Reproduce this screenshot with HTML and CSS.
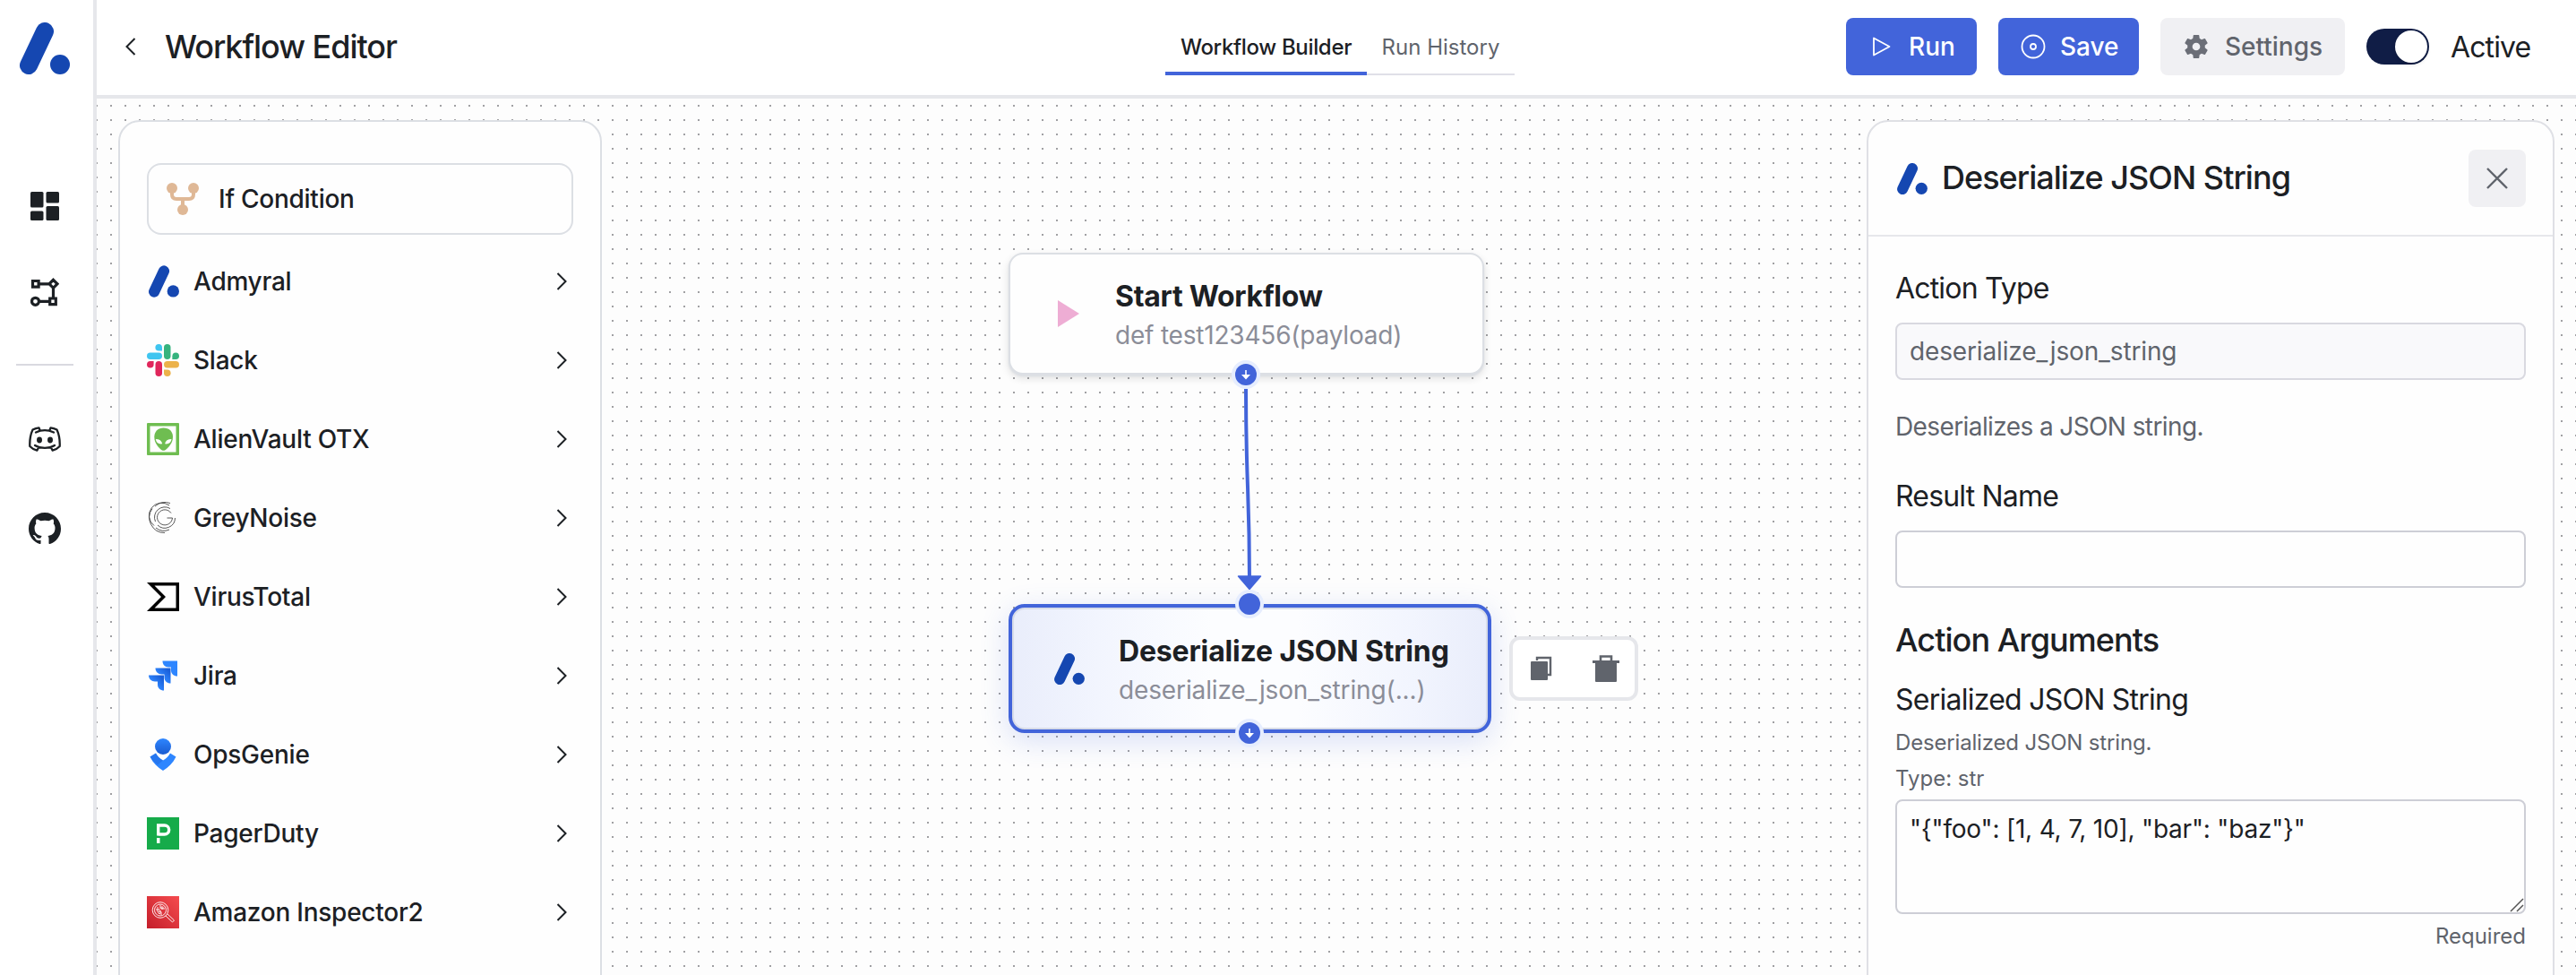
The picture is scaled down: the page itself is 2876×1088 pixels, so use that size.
FILE: index.html
```html
<!DOCTYPE html>
<html lang="en">
<head>
<meta charset="utf-8">
<title>Workflow Editor</title>
<link rel="stylesheet" href="styles.css">
</head>
<body>
<svg class="defs" width="0" height="0">
  <symbol id="logo" viewBox="0 0 56 58"><path d="M28 10 10 48" fill="none" stroke="#1547b1" stroke-width="20" stroke-linecap="round"/><circle cx="45" cy="47" r="11" fill="#1547b1"/></symbol>
  <symbol id="chev" viewBox="0 0 12 20"><path d="M1.500 1 10.500 10 1.500 19" fill="none" stroke="#1c2024" stroke-width="2"/></symbol>
  <symbol id="down" viewBox="0 0 32 32"><circle cx="16" cy="16" r="16" fill="#e6edfe"/><circle cx="16" cy="16" r="12" fill="#4264da"/><path d="M15.200 11h1.600v5h4.200l-5 5.500-5-5.500h4.200z" fill="#fff"/></symbol>
</svg>
<div class="app">
  <nav class="sidebar">
    <svg class="brand" viewBox="0 0 56 58"><use href="#logo"/></svg>
    <svg class="nav-dash" viewBox="0 0 32 32" fill="#1c2024"><rect width="14.500" height="17.500" rx="1.500"/><rect x="17.500" width="14.500" height="12.500" rx="1.500"/><rect y="21.500" width="14.500" height="10.500" rx="1.500"/><rect x="17.500" y="16" width="14.500" height="16" rx="1.500"/></svg>
    <svg class="nav-flow" viewBox="0 0 32 32" fill="none" stroke="#1c2024" stroke-width="3.200"><path d="M2.500 3.500h6.600v6.600H2.500zM9 6.800h12M25.500 2.300l4.500 4.500-4.500 4.500-4.500-4.500zM25.500 11v12M21.700 23h6.600v6.600h-6.600zM22 26.300H10"/><circle cx="5.500" cy="26.300" r="4"/></svg>
    <span class="nav-line"></span>
    <svg class="nav-discord" viewBox="0 0 36 28" fill="none" stroke="#1c2024" stroke-width="2.300" stroke-linecap="round" stroke-linejoin="round"><path d="M8 6.500C14 3.500 22 3.500 28 6.500M7 21c6 3.800 16 3.800 22 0M12.500 4 11.500 1.300C8.500 1.500 6.500 2.400 4.500 3.600 2 9 1 15 1.300 22c2.200 2.300 4.700 3.800 8 4.700l2-3.700M23.500 4l1-2.700c3 .2 5 1.100 7 2.300 2.500 5.400 3.500 11.400 3.200 18.400-2.200 2.300-4.700 3.800-8 4.700l-2-3.700"/><g fill="#1c2024" stroke="none"><ellipse cx="12" cy="15" rx="3" ry="3.400"/><ellipse cx="24" cy="15" rx="3" ry="3.400"/></g></svg>
    <svg class="nav-github" viewBox="0 0 16 16" fill="#1c2024"><path d="M8 0C3.580 0 0 3.580 0 8c0 3.540 2.290 6.530 5.470 7.590.4.070.55-.17.55-.38 0-.19-.01-.82-.01-1.490-2.010.37-2.530-.49-2.690-.94-.09-.23-.48-.94-.82-1.130-.28-.15-.68-.52-.01-.53.63-.01 1.080.58 1.230.82.72 1.210 1.870.87 2.330.66.07-.52.28-.87.51-1.070-1.780-.2-3.640-.89-3.640-3.950 0-.87.31-1.590.82-2.150-.08-.2-.36-1.020.08-2.120 0 0 .67-.21 2.200.82.64-.18 1.320-.27 2-.27s1.360.09 2 .27c1.530-1.040 2.200-.82 2.200-.82.44 1.100.16 1.920.08 2.120.51.56.82 1.270.82 2.150 0 3.070-1.870 3.750-3.650 3.950.29.25.54.73.54 1.480 0 1.070-.01 1.930-.01 2.200 0 .21.15.46.55.38A8.010 8.010 0 0 0 16 8c0-4.420-3.580-8-8-8z"/></svg>
  </nav>
  <div class="main">
    <header class="topbar">
      <div class="top-left">
        <svg class="back" viewBox="0 0 12 20"><path d="M10.500 1 1.500 10l9 9" fill="none" stroke="#1c2024" stroke-width="2"/></svg>
        <h1 class="title">Workflow Editor</h1>
      </div>
      <div class="tabs"><div class="tab tab-on"><span>Workflow Builder</span></div><div class="tab"><span>Run History</span></div></div>
      <div class="top-right">
        <button class="btn btn-run"><svg width="20" height="22" viewBox="0 0 20 22"><path d="M1 1.500v19L18.500 11z" fill="none" stroke="#fff" stroke-width="1.800" stroke-linejoin="round"/></svg><span>Run</span></button>
        <button class="btn btn-save"><svg width="28" height="28" viewBox="0 0 28 28" fill="none" stroke="#fff" stroke-width="1.800"><circle cx="14" cy="14" r="12.500"/><circle cx="14" cy="14" r="3"/></svg><span>Save</span></button>
        <button class="btn btn-set"><svg width="28" height="28" viewBox="1.700 1.700 20.600 20.600" fill="#6b6e77"><path d="M19.140 12.940c.04-.3.060-.61.060-.94 0-.32-.02-.64-.07-.94l2.030-1.580a.49.490 0 0 0 .12-.61l-1.920-3.320a.488.488 0 0 0-.59-.22l-2.390.96c-.5-.38-1.030-.7-1.620-.94l-.36-2.540a.484.484 0 0 0-.48-.41h-3.840c-.24 0-.43.17-.47.41l-.36 2.540c-.59.24-1.130.57-1.620.94l-2.390-.96c-.22-.08-.47 0-.59.22L2.740 8.870c-.12.21-.08.47.12.61l2.030 1.580c-.05.3-.09.63-.09.94s.02.64.07.94l-2.030 1.580a.49.490 0 0 0-.12.61l1.920 3.320c.12.22.37.29.59.22l2.390-.96c.5.38 1.030.7 1.620.94l.36 2.540c.05.24.24.41.48.41h3.840c.24 0 .44-.17.47-.41l.36-2.540c.59-.24 1.130-.56 1.620-.94l2.390.96c.22.080.47 0 .59-.22l1.920-3.320c.12-.22.07-.47-.12-.61zM12 15.200a3.200 3.200 0 1 1 0-6.400 3.200 3.200 0 0 1 0 6.400z"/></svg><span>Settings</span></button>
        <span class="switch"><span class="thumb"></span></span>
        <span class="active-label">Active</span>
      </div>
    </header>
    <div class="canvas">
      <aside class="palette">
        <div class="if-box"><svg width="36" height="36" viewBox="0 0 36 36" fill="#dfb896"><circle cx="6" cy="6" r="6"/><circle cx="30" cy="6" r="6"/><circle cx="18" cy="30" r="6"/><path d="M6 10v3q0 5 5 5h14q5 0 5-5v-3M18 18v8" fill="none" stroke="#dfb896" stroke-width="4"/></svg><span>If Condition</span></div>
        <div class="item"><svg class="ic" viewBox="-2 0 36 36"><use href="#logo" x="0" y="0" width="34" height="36"/></svg><span>Admyral</span><svg class="chev"><use href="#chev"/></svg></div>
        <div class="item"><svg class="ic" viewBox="0 0 36 36"><g fill="#3fc5f0"><path d="M13.200 0a3.800 3.800 0 0 1 3.800 3.800v3.800h-3.800a3.800 3.800 0 0 1 0-7.600z"/><rect y="9.500" width="17" height="7.500" rx="3.750"/></g><g fill="#35b37e"><rect x="19" width="7.500" height="17" rx="3.750"/><path d="M36 13.200a3.800 3.800 0 0 1-3.800 3.800h-3.800v-3.800a3.800 3.800 0 0 1 7.600 0z"/></g><g fill="#ecb24a"><rect x="19" y="19" width="17" height="7.500" rx="3.750"/><path d="M22.800 36a3.800 3.800 0 0 1-3.800-3.800v-3.800h3.800a3.800 3.800 0 0 1 0 7.600z"/></g><g fill="#e0265b"><rect x="9.500" y="19" width="7.500" height="17" rx="3.750"/><path d="M0 22.800A3.800 3.800 0 0 1 3.800 19h3.800v3.800a3.800 3.800 0 0 1-7.600 0z"/></g></svg><span>Slack</span><svg class="chev"><use href="#chev"/></svg></div>
        <div class="item"><svg class="ic" viewBox="0 0 36 36"><rect width="36" height="36" rx="1" fill="#6fbd51"/><rect x="3.500" y="3.500" width="29" height="29" fill="#fff"/><path d="M18.500 5.500C25 5.500 29 9.500 29 15.500c0 7.500-5.500 12.500-8.500 14.700q-2 1.200-4 0C13.500 28 8.300 23 8.300 15.500 8.300 9.500 12.500 5.500 18.500 5.500z" fill="#6fbd51"/><path d="M9.800 18c4.200 0 6.700 1.700 7.400 5.300-4.200.6-6.900-1.300-7.400-5.300zM27.500 18c-4.200 0-6.700 1.700-7.400 5.300 4.200.6 6.900-1.300 7.400-5.300z" fill="#fff"/></svg><span>AlienVault OTX</span><svg class="chev"><use href="#chev"/></svg></div>
        <div class="item"><svg class="ic" viewBox="0 0 36 36" fill="none" stroke="#444" stroke-width=".9"><path d="M27 12.500A8.500 8.500 0 1 0 28.500 18H22.500M26 7.500A11.500 11.500 0 0 0 9.500 22M12 26A11.500 11.500 0 0 0 31.500 18M25 4A14 14 0 0 0 8 26.500M10 29A14.500 14.500 0 0 0 25 31M26 1.500A17 17 0 0 0 9 5M6 7.500A17 17 0 0 0 20 34.500"/></svg><span>GreyNoise</span><svg class="chev"><use href="#chev"/></svg></div>
        <div class="item"><svg class="ic" viewBox="0 0 36 36"><path fill-rule="evenodd" d="M0 2h36v32H0l16-16zM8.500 5.500l12.500 12.500L8.500 30.500h24V5.500z"/></svg><span>VirusTotal</span><svg class="chev"><use href="#chev"/></svg></div>
        <div class="item"><svg class="ic" viewBox="0 0 36 36"><defs><linearGradient id="j" x1="1" y1="0" x2="0" y2="1"><stop offset=".15" stop-color="#1a5fd8"/><stop offset=".6" stop-color="#2e86ff"/></linearGradient></defs><path d="M17.500 1.500H34V18.500c-4 0-7-2.500-7-6.500V8.500h-3c-4 0-6.500-3-6.500-7z" fill="#2e86ff"/><path d="M9.500 9.500H26.500V26.500c-4 0-7-2.500-7-6.500v-3.500h-3c-4 0-7-3-7-7z" fill="url(#j)"/><path d="M2 17.500h17V34.500c-4 0-7-2.500-7-6.500v-3.500H9c-4 0-7-3-7-7z" fill="url(#j)"/></svg><span>Jira</span><svg class="chev"><use href="#chev"/></svg></div>
        <div class="item"><svg class="ic" viewBox="0 0 36 36"><defs><linearGradient id="o" x1="0" y1="0" x2="0" y2="1"><stop stop-color="#2e86ff"/><stop offset="1" stop-color="#1a5bd0"/></linearGradient></defs><circle cx="18" cy="9" r="9" fill="url(#o)"/><path d="M3.500 20.500 10 16.500q3 5.500 8 8 5-2.500 8-8l6.500 4C29 27.500 24 32.500 18 36 12 32.500 7 27.500 3.500 20.500z" fill="#2e86ff"/><path d="M10 16.500q3 5.500 8 8l-6 5Q6 25 3.500 20.500z" fill="#1f68e0" opacity=".5"/></svg><span>OpsGenie</span><svg class="chev"><use href="#chev"/></svg></div>
        <div class="item"><svg class="ic" viewBox="0 0 36 36"><rect width="36" height="36" fill="#16ab4a"/><path d="M12.700 20.500V9h7a5 5 0 0 1 0 10h-7" fill="none" stroke="#fff" stroke-width="3.400"/><path d="M11 23h3.500v6H11z" fill="#fff"/></svg><span>PagerDuty</span><svg class="chev"><use href="#chev"/></svg></div>
        <div class="item"><svg class="ic" viewBox="0 0 36 36"><defs><linearGradient id="a" x1="0" y1="1" x2="1" y2="0"><stop stop-color="#c41e2a"/><stop offset="1" stop-color="#f54b4e"/></linearGradient></defs><rect width="36" height="36" fill="url(#a)"/><g fill="none" stroke="#fff" stroke-width=".9"><circle cx="15" cy="15.500" r="8.800"/><circle cx="15" cy="15.500" r="6.500"/><path d="m21 22 7.500 7 2-2-7.500-7M15 10v4M10 15h4l2 3v3M16 14h4M12 12v6"/><circle cx="17" cy="13" r="1.200"/><circle cx="14" cy="18.500" r="1.200"/></g></svg><span>Amazon Inspector2</span><svg class="chev"><use href="#chev"/></svg></div>
      </aside>

      <svg class="edge" width="40" height="230" viewBox="0 0 40 230"><path d="M13 0C13 110 17 110 17 214" fill="none" stroke="#4264da" stroke-width="4"/><path d="M4.500 209h25L17 223.500z" fill="#4264da" stroke="#4264da" stroke-width="1.500" stroke-linejoin="round"/></svg>
      <div class="node node-start">
        <svg class="play" width="24" height="32" viewBox="0 0 24 32"><path d="M0 1v30l24-15z" fill="#eeadd4"/></svg>
        <div class="node-text"><b>Start Workflow</b><span>def test123456(payload)</span></div>
        <svg class="handle h-bottom"><use href="#down"/></svg>
      </div>
      <div class="node node-json">
        <svg class="node-logo" viewBox="0 0 56 58"><use href="#logo"/></svg>
        <div class="node-text"><b>Deserialize JSON String</b><span>deserialize_json_string(...)</span></div>
        <span class="handle h-top"></span>
        <svg class="handle h-bottom"><use href="#down"/></svg>
      </div>
      <div class="tools">
        <svg width="26" height="28" viewBox="0 0 26 28"><path d="M8 5V2h15v19h-3" fill="none" stroke="#60646c" stroke-width="2.400"/><rect x="1" y="6" width="19" height="21" rx="1" fill="#60646c"/></svg>
        <svg width="30" height="30" viewBox="0 0 30 30" fill="#60646c"><path d="M3 9h24v20a1 1 0 0 1-1 1H4a1 1 0 0 1-1-1zM0 6h30v3H0z"/><path d="M9 6V1.500h12V6" fill="none" stroke="#60646c" stroke-width="2.600"/></svg>
      </div>

      <aside class="panel">
        <div class="panel-head">
          <svg class="panel-logo" viewBox="0 0 56 58"><use href="#logo"/></svg>
          <h2 class="panel-title">Deserialize JSON String</h2>
          <button class="close"><svg width="24" height="24" viewBox="0 0 24 24"><path d="m1 1 22 22M23 1 1 23" stroke="#60646c" stroke-width="2.400"/></svg></button>
        </div>
        <div class="panel-body">
          <label class="lbl">Action Type</label>
          <div class="input input-off"><span>deserialize_json_string</span></div>
          <p class="desc">Deserializes a JSON string.</p>
          <label class="lbl">Result Name</label>
          <div class="input"></div>
          <h3 class="sec">Action Arguments</h3>
          <label class="lbl lbl-arg">Serialized JSON String</label>
          <p class="hint">Deserialized JSON string.</p>
          <p class="hint hint-type">Type: str</p>
          <div class="area"><span>"{"foo": [1, 4, 7, 10], "bar": "baz"}"</span><svg class="grip" width="16" height="16" viewBox="0 0 16 16"><path d="M1 15 15 1M8 15l7-7" stroke="#555" stroke-width="1.500"/></svg></div>
          <p class="req">Required</p>
        </div>
      </aside>
    </div>
  </div>
</div>
</body>
</html>
```
FILE: styles.css
```css
* { box-sizing: border-box; margin: 0; padding: 0; }
body { font-family: Inter, "Liberation Sans", sans-serif; color: #1c2024; background: #fff; overflow: hidden; font-size: 28px; }
svg { display: block; flex: none; }
.defs { position: absolute; }
button { border: 0; font: inherit; }
.app { display: flex; width: 2876px; height: 1088px; }

/* navigation rail */
.sidebar { width: 108px; flex: none; border-right: 4px solid #e6e7eb; display: flex; flex-direction: column; align-items: center; padding: 25px 4px 0 0; }
.brand { width: 56px; height: 58px; }
.nav-dash { width: 32px; height: 32px; margin-top: 131px; }
.nav-flow { width: 32px; height: 32px; margin-top: 64px; }
.nav-line { width: 64px; height: 2px; background: #d9d9e0; margin-top: 64px; }
.nav-discord { width: 36px; height: 28px; margin-top: 68px; }
.nav-github { width: 36px; height: 36px; margin-top: 68px; }

/* header */
.main { flex: 1; min-width: 0; display: flex; flex-direction: column; }
.topbar { height: 110px; flex: none; border-bottom: 4px solid #e6e7eb; display: flex; align-items: flex-start; padding: 20px 51px 0 32px; }
.top-left { display: flex; align-items: center; height: 64px; width: 1161px; }
.back { width: 12px; height: 20px; }
.title { font-size: 36px; font-weight: 500; margin-left: 32px; letter-spacing: -1.05px; white-space: nowrap; }
.tabs { display: flex; height: 64px; font-size: 24px; }
.tab { width: 165px; display: flex; align-items: center; justify-content: center; border-bottom: 2px solid #e0e0e8; color: #60646c; padding-top: 2px; white-space: nowrap; }
.tab-on { width: 225px; border-bottom: 4px solid #4264da; color: #1c2024; font-weight: 500; padding-top: 4px; letter-spacing: -0.33px; }
.top-right { display: flex; align-items: center; height: 64px; margin-left: auto; }
.btn { height: 64px; border-radius: 8px; display: flex; align-items: center; background: #4264da; color: #fff; font-weight: 500; margin-right: 24px; white-space: nowrap; }
.btn-run { width: 146px; padding-left: 30px; gap: 20px; }
.btn-save { width: 157px; padding-left: 25px; gap: 16px; }
.btn-set { width: 206px; padding-left: 26px; gap: 18px; background: #f0f0f3; color: #60646c; }
.switch { width: 70px; height: 40px; border-radius: 20px; background: #101d46; display: flex; justify-content: flex-end; padding: 2px; }
.thumb { width: 36px; height: 36px; border-radius: 50%; background: #fff; box-shadow: 0 2px 4px rgba(0,0,0,.15); }
.active-label { width: 89px; font-size: 32px; margin-left: 24px; letter-spacing: -0.9px; padding-top: 1px; }

/* canvas: 2px dots on a 16px grid */
.canvas { flex: 1; position: relative; display: flex; justify-content: space-between; padding: 24px 24px 0; overflow: hidden; background: conic-gradient(from 270deg at 2px 2px, #a0a0a3 90deg, transparent 0) -1px 7px / 16px 16px #fdfdfd; }
.palette { width: 540px; height: 1100px; background: #fefefe; border: 2px solid #dcdfe4; border-radius: 24px; padding: 46px 30px 0; letter-spacing: -0.25px; }
.if-box { height: 80px; border: 2px solid #dcdfe4; border-radius: 16px; display: flex; align-items: center; padding-left: 20px; gap: 22px; font-weight: 500; margin-bottom: 8px; }
.item { height: 88px; display: flex; align-items: center; gap: 16px; font-weight: 500; padding-right: 7px; white-space: nowrap; }
.ic { width: 36px; height: 36px; }
.chev { width: 12px; height: 20px; margin-left: auto; }

/* diagram nodes */
.node { position: absolute; display: flex; align-items: center; }
.node-start { left: 1018px; top: 172px; width: 531px; height: 136px; border: 2px solid #dcdfe4; border-radius: 16px; background: #fefefe; box-shadow: 0 2px 2px #dcdfe4, 0 4px 10px rgba(0,0,0,.12); padding-left: 53px; gap: 40px; }
.node-json { left: 1018px; top: 564px; width: 539px; height: 144px; border: 4px solid #4264da; border-radius: 18px; background: linear-gradient(90deg, #e9edfb 0, #f2f5fe 18%, #fcfdff 42%, #fcfdff 60%, #f2f5fe 84%, #e9edfb 100%); box-shadow: inset 0 0 0 2px #d8dce8, 0 8px 32px rgba(66,100,218,.2); padding-left: 47px; gap: 38px; }
.node-text { display: flex; flex-direction: column; white-space: nowrap; padding-top: 4px; }
.node-text b { font-size: 32px; font-weight: 700; line-height: 40px; letter-spacing: -0.28px; }
.node-json b { letter-spacing: -0.16px; }
.node-text span { color: #8b8d98; font-size: 28px; line-height: 40px; padding-top: 3px; letter-spacing: -0.2px; }
.node-json .node-text span { letter-spacing: -0.13px; }
.node-logo { width: 34px; height: 35px; }
.handle { position: absolute; width: 32px; height: 32px; }
.node-start .h-bottom { left: 247px; bottom: -18px; }
.node-json .h-bottom { left: 249px; bottom: -20px; }
.h-top { left: 249px; top: -20px; border-radius: 50%; background: #4264da; border: 4px solid #e6edfe; }
.edge { position: absolute; left: 1270px; top: 324px; }
.tools { position: absolute; left: 1577px; top: 600px; width: 144px; height: 72px; border: 4px solid #e6e7eb; border-radius: 12px; background: #fff; display: flex; align-items: center; justify-content: space-between; padding: 0 17px 0 19px; }

/* details panel */
.panel { width: 768px; height: 1100px; background: #fefefe; border: 2px solid #dfe0e5; border-radius: 24px; }
.panel-head { height: 128px; border-bottom: 2px solid #e6e7eb; display: flex; align-items: center; padding: 0 30px; }
.panel-logo { width: 34px; height: 35px; margin-left: 2px; }
.panel-title { font-size: 36px; font-weight: 500; margin-left: 16px; white-space: nowrap; letter-spacing: -0.97px; padding-bottom: 2px; }
.close { width: 64px; height: 64px; margin-left: auto; border-radius: 8px; background: #f0f0f3; display: flex; align-items: center; justify-content: center; }
.panel-body { padding: 38px 30px 0; display: flex; flex-direction: column; align-items: stretch; }
.panel-body > * { white-space: nowrap; }
.lbl { font-size: 32px; line-height: 40px; align-self: flex-start; letter-spacing: -0.82px; }
.input { height: 64px; margin-top: 18px; border: 2px solid #cdced6; border-radius: 8px; display: flex; align-items: center; padding-left: 14px; letter-spacing: -0.14px; }
.input-off { background: #f9f9fb; border-color: #d9d9e0; color: #60646c; }
.desc { color: #60646c; line-height: 40px; margin: 32px 0 38px; align-self: flex-start; letter-spacing: -0.6px; }
.sec { font-size: 36px; font-weight: 500; line-height: 44px; margin-top: 36px; align-self: flex-start; letter-spacing: -0.94px; }
.lbl-arg { margin-top: 25px; letter-spacing: -0.75px; }
.hint { font-size: 24px; line-height: 32px; color: #60646c; margin-top: 12px; align-self: flex-start; letter-spacing: -0.17px; }
.hint-type { margin-top: 8px; letter-spacing: 0; }
.area { position: relative; height: 128px; margin-top: 7px; border: 2px solid #cdced6; border-radius: 8px; padding: 9px 14px; line-height: 44px; letter-spacing: -0.2px; }
.grip { position: absolute; right: 0; bottom: 0; }
.req { font-size: 24px; line-height: 32px; color: #60646c; margin-top: 9px; align-self: flex-end; }
```
